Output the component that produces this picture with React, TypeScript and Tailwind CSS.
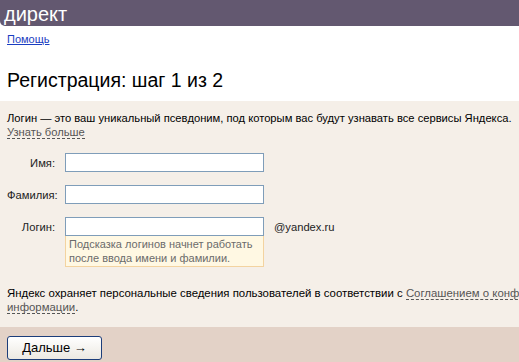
export default function App() {
  return (
    <div className="w-[519px] h-[362px] overflow-hidden bg-white font-['Liberation_Sans',Arial,sans-serif] text-black">
      {/* header */}
      <div className="h-[26px] bg-[#635870] rounded-bl-[5px] pl-[4px] pt-[1px] text-white text-[20px] leading-[26px]">
        директ
      </div>

      <div className="px-[7px] pt-[7px] h-[26px] text-[11px] leading-[13px]">
        <a href="#" className="text-[#1a3dc1] underline">Помощь</a>
      </div>

      <h1 className="px-[7px] pt-[16px] h-[49px] text-[19.5px] leading-[24px]">Регистрация: шаг 1 из 2</h1>

      {/* form area */}
      <div className="bg-[#f5efe8] h-[226px] px-[7px] pt-[10px] text-[11.2px] leading-[14px]">
        <p className="whitespace-nowrap">
          Логин — это ваш уникальный псевдоним, под которым вас будут узнавать все сервисы Яндекса.
          <br />
          <span className="text-[#555] border-b border-dashed border-[#555]">Узнать больше</span>
        </p>

        <div className="mt-[14px] flex flex-col gap-[13px]">
          <div className="flex items-center">
            <label className="w-[48px] text-right mr-[10px] text-[#222]">Имя:</label>
            <div className="w-[199px] h-[19px] bg-white border border-[#7f9db9]" />
          </div>
          <div className="flex items-center">
            <label className="w-[48px] text-right mr-[10px] text-[#222]">Фамилия:</label>
            <div className="w-[199px] h-[19px] bg-white border border-[#7f9db9]" />
          </div>
          <div className="flex items-start">
            <label className="w-[48px] text-right mr-[10px] mt-[3px] text-[#222]">Логин:</label>
            <div className="w-[199px] flex flex-col">
              <div className="h-[19px] bg-white border border-[#7f9db9]" />
              <div className="bg-[#fff8e3] border border-t-0 border-[#f3d3a0] px-[3px] pt-[1px] pb-[1px] text-[11px] leading-[14px] text-[#6b6b6b]">
                Подсказка логинов начнет работать после ввода имени и фамилии.
              </div>
            </div>
            <span className="ml-[10px] mt-[3px] text-[#222]">@yandex.ru</span>
          </div>
        </div>

        <p className="mt-[19px] whitespace-nowrap text-[11.4px]">
          Яндекс охраняет персональные сведения пользователей в соответствии с{' '}
          <span className="text-[#555] border-b border-dashed border-[#555]">Соглашением о конфиденциальности</span>
          <br />
          <span className="text-[#555] border-b border-dashed border-[#555]">информации</span>.
        </p>
      </div>

      {/* footer */}
      <div className="bg-[#e3d2c7] h-[35px] px-[7px] pt-[8px]">
        <button className="w-[95px] h-[24px] rounded-[3px] border border-[#1c3d7a] bg-gradient-to-b from-white to-[#ece9e2] text-[13px] leading-none text-black">
          Дальше →
        </button>
      </div>
    </div>
  )
}
